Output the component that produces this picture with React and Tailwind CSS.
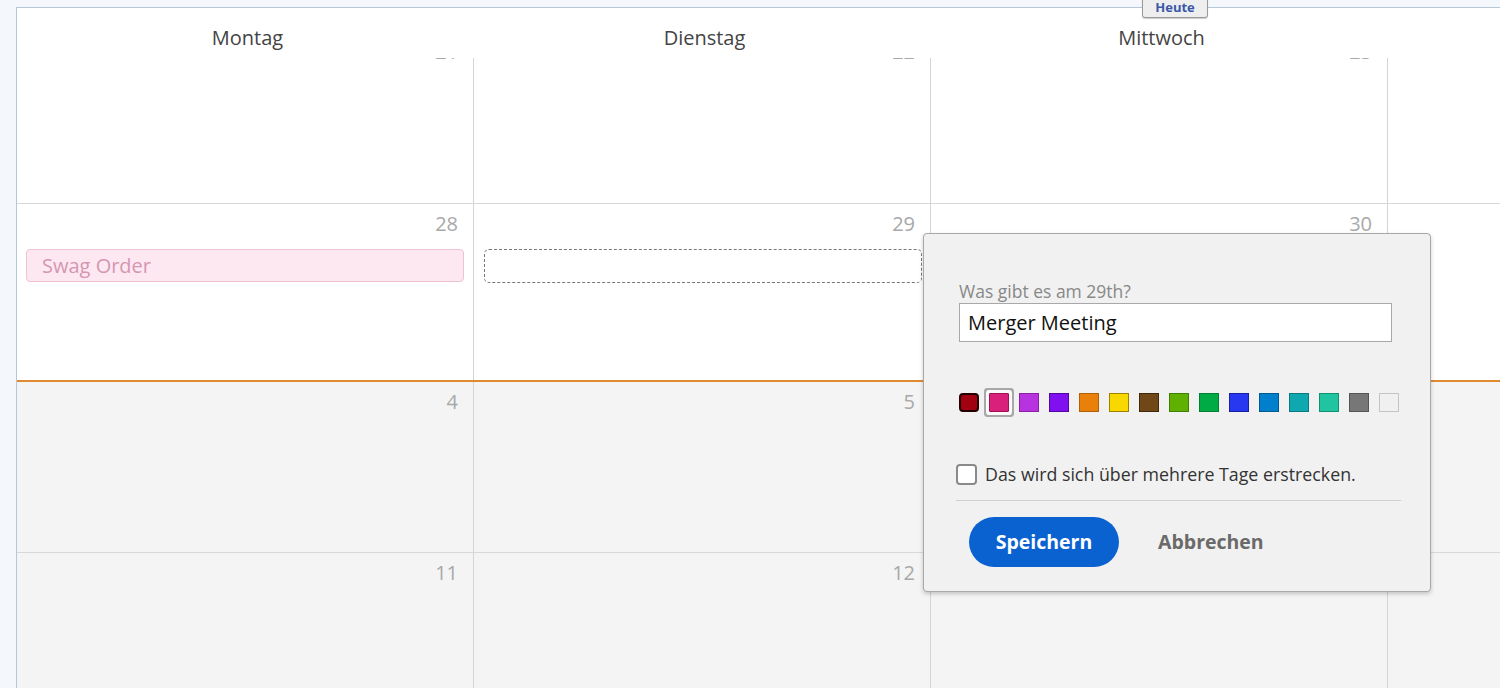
import React from 'react'

const font = { fontFamily: '"Open Sans", Lato, Arial, sans-serif' }

const days = ['Montag', 'Dienstag', 'Mittwoch', '']

const rows = [
  { nums: ['21', '22', '23', ''], grey: false, h: 'h-[172px] -mt-[26px]' },
  { nums: ['28', '29', '30', ''], grey: false, h: 'h-[178px]' },
  { nums: ['4', '5', '6', ''], grey: true, h: 'h-[171px]' },
  { nums: ['11', '12', '13', ''], grey: true, h: 'h-[172px]' },
]

const swatches = [
  { c: 'bg-[#a00010] border-[#200] border-2 rounded-[4px]' },
  { c: 'bg-[#d9207a] border-[#a01050] shadow-[0_0_0_3px_#fafafa,0_0_0_5px_#a8a8a8] rounded-[1px]' },
  { c: 'bg-[#b833e0] border-[#8a20a8]' },
  { c: 'bg-[#8010f0] border-[#5008a0]' },
  { c: 'bg-[#e8800a] border-[#b06008]' },
  { c: 'bg-[#f8d800] border-[#a08000]' },
  { c: 'bg-[#704818] border-[#40280a]' },
  { c: 'bg-[#60b000] border-[#408000]' },
  { c: 'bg-[#00aa44] border-[#008030]' },
  { c: 'bg-[#2838f0] border-[#1820a0]' },
  { c: 'bg-[#0080cc] border-[#005a90]' },
  { c: 'bg-[#10a8b0] border-[#0a7a80]' },
  { c: 'bg-[#20c4a0] border-[#109070]' },
  { c: 'bg-[#777777] border-[#555555]' },
  { c: 'bg-[#f0f0f0] border-[#c4c4c4]' },
]

function Row({ row, idx }) {
  return (
    <div
      className={`flex shrink-0 ${row.h} ${
        idx === 1 ? 'border-b-2 border-b-[#e08a30]' : 'border-b border-b-[#d8d8d8]'
      } ${row.grey ? 'bg-[#f4f4f4]' : 'bg-white'}`}
    >
      {row.nums.map((n, i) => (
        <div
          key={i}
          className={`relative w-[457px] shrink-0 pr-[15px] pt-[5px] text-right text-[20px] text-[#a8a8a8] ${
            i < 3 ? 'border-r border-r-[#d4d4d4]' : ''
          }`}
        >
          {n}
          {idx === 1 && i === 0 && (
            <div className="mt-[10px] ml-[9px] -mr-[6px] flex h-[33px] items-center rounded-[4px] border border-[#efc2d4] bg-[#fde8f1] pl-[15px] text-left text-[20px] text-[#d596b2]">
              Swag Order
            </div>
          )}
          {idx === 1 && i === 1 && (
            <div className="mt-[10px] ml-[10px] -mr-[7px] h-[34px] rounded-[5px] border border-dashed border-[#777]" />
          )}
        </div>
      ))}
    </div>
  )
}

export default function App() {
  return (
    <div className="h-[688px] overflow-hidden bg-[#f4f8fc] pl-[16px] pt-[7px]" style={font}>
      <div className="relative h-full border-l border-t border-[#b6c8d8] bg-white">
        {/* Heute tab */}
        <div className="absolute left-[1125px] top-[-13px] z-20 flex h-[23px] w-[66px] items-end justify-center rounded-[3px] border border-[#999] bg-[#eeeeee] pb-[3px] text-[13px] font-bold leading-none text-[#3a58a8] shadow-[0_1px_1px_rgba(0,0,0,0.2)]">
          Heute
        </div>

        {/* Header */}
        <div className="relative z-10 flex h-[50px] bg-white">
          {days.map((d, i) => (
            <div key={i} className="w-[457px] shrink-0 pt-[17px] text-center text-[20px] leading-[26px] text-[#444]">
              <span className="ml-[4px]">{d}</span>
            </div>
          ))}
        </div>

        {/* Body */}
        <div className="flex h-[631px] flex-col overflow-hidden">
          {rows.map((r, i) => (
            <Row key={i} row={r} idx={i} />
          ))}
        </div>

        {/* Popup */}
        <div className="absolute left-[906px] top-[225px] z-30 w-[508px] rounded-[4px] border border-[#a8a8a8] bg-[#f1f1f1] px-[32px] pb-[24px] pt-[46px] shadow-[0_2px_4px_rgba(0,0,0,0.2)]">
          <div className="ml-[3px] text-[17.5px] leading-[22px] text-[#888]">Was gibt es am 29th?</div>
          <div className="ml-[3px] mt-[1px] flex h-[39px] w-[433px] items-center border border-[#a8a8a8] bg-white pl-[8px] text-[20px] text-[#111]">
            Merger Meeting
          </div>
          <div className="ml-[3px] mt-[51px] flex items-center gap-[10px]">
            {swatches.map((s, i) => (
              <div key={i} className={`h-[19px] w-[20px] shrink-0 border ${s.c}`} />
            ))}
          </div>
          <div className="mt-[51px] flex items-center gap-[8px]">
            <div className="h-[21px] w-[21px] rounded-[4px] border-2 border-[#8a8a8a] bg-white" />
            <span className="text-[17.8px] leading-[22px] text-[#333]">Das wird sich über mehrere Tage erstrecken.</span>
          </div>
          <div className="mt-[15px] h-px w-[445px] bg-[#cfcfcf]" />
          <div className="mt-[16px] flex items-center">
            <button className="ml-[13px] h-[50px] w-[150px] rounded-full bg-[#0a62d0] text-[19.5px] font-bold text-white">
              Speichern
            </button>
            <span className="ml-[39px] text-[19.5px] font-bold text-[#6a6a6a]">Abbrechen</span>
          </div>
        </div>
      </div>
    </div>
  )
}
